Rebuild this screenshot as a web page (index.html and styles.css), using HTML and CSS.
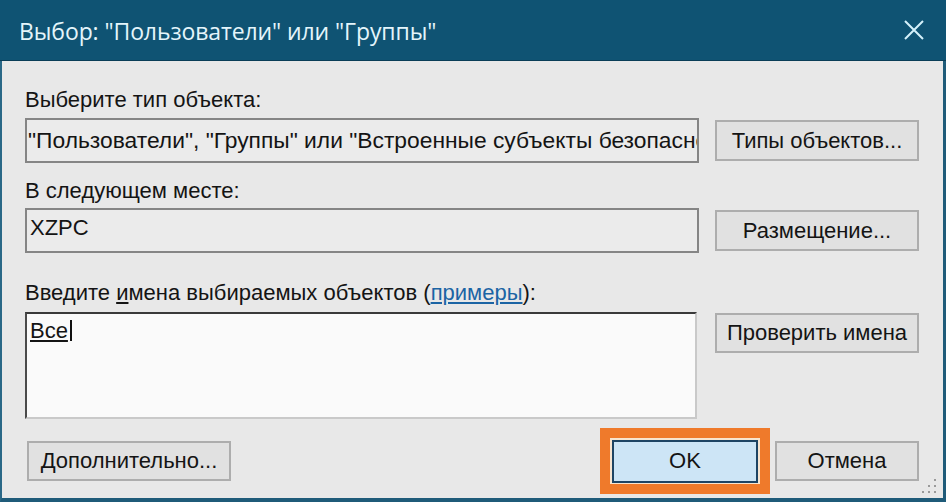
FILE: index.html
```html
<!DOCTYPE html>
<html lang="ru">
<head>
<meta charset="utf-8">
<title>Выбор: "Пользователи" или "Группы"</title>
<link rel="stylesheet" href="styles.css">
</head>
<body>
<div class="window">
  <div class="titlebar">
    <span class="title">Выбор: "Пользователи" или "Группы"</span>
    <svg class="close" width="20" height="20" viewBox="0 0 20 20"><path d="M1 1 L19 19 M19 1 L1 19" stroke="#d4f1fb" stroke-width="2" fill="none"/></svg>
  </div>
  <div class="content">
    <div class="label l1">Выберите тип объекта:</div>
    <div class="row r1">
      <div class="field f1">"Пользователи", "Группы" или "Встроенные субъекты безопасности"</div>
      <button class="btn">Типы объектов...</button>
    </div>
    <div class="label l2">В следующем месте:</div>
    <div class="row r2">
      <div class="field f2">XZPC</div>
      <button class="btn">Размещение...</button>
    </div>
    <div class="label l3">Введите <u>и</u>мена выбираемых объектов (<a class="link" href="#">примеры</a>):</div>
    <div class="row r3">
      <div class="names"><span class="name">Все</span><span class="caret"></span></div>
      <button class="btn btn-top">Проверить имена</button>
    </div>
    <div class="bottom">
      <button class="btn btn-adv">Дополнительно...</button>
      <div class="spacer"></div>
      <div class="highlight"><button class="btn btn-ok">OK</button></div>
      <button class="btn btn-cancel">Отмена</button>
    </div>
  </div>
  <svg class="grip" width="18" height="18" viewBox="0 0 18 18">
    <g fill="#9a9a9a">
      <rect x="13" y="1" width="2" height="2"/>
      <rect x="7" y="7" width="2" height="2"/><rect x="13" y="7" width="2" height="2"/>
      <rect x="1" y="13" width="2" height="2"/><rect x="7" y="13" width="2" height="2"/><rect x="13" y="13" width="2" height="2"/>
    </g>
  </svg>
</div>
</body>
</html>
```

FILE: styles.css
```css
* { box-sizing: border-box; }
html, body { margin: 0; padding: 0; }
body {
  width: 946px;
  height: 502px;
  overflow: hidden;
  background: #e8e8e8;
  font-family: "Liberation Sans", Arial, sans-serif;
  font-size: 22px;
  line-height: 24px;
  color: #141414;
}
.window {
  position: relative;
  width: 946px;
  height: 502px;
  background: #e8e8e8;
  border-left: 2px solid #2a6887;
  border-right: 3px solid #1f5b79;
  border-bottom: 4px solid #1f5b79;
  display: flex;
  flex-direction: column;
}
.titlebar {
  height: 61px;
  flex: none;
  margin-left: -2px;
  margin-right: -3px;
  background: #0f5373;
  border-bottom: 1px solid #0a3d57;
  display: flex;
  align-items: center;
  padding-left: 19px;
  padding-right: 22px;
  padding-top: 1px;
}
.title {
  flex: 1;
  color: #e4f5fb;
  font-family: "Open Sans", "Liberation Sans", sans-serif;
  font-size: 23px;
  letter-spacing: -0.1px;
  white-space: nowrap;
}
.close { flex: none; margin-top: -2px; }
.content {
  flex: 1;
  padding: 0 24px 0 23px;
  display: flex;
  flex-direction: column;
}
.label { height: 24px; white-space: nowrap; }
.l1 { margin-top: 27px; }
.l2 { margin-top: 16px; }
.l3 { margin-top: 28px; }
.row {
  display: grid;
  grid-template-columns: 674px 204px;
  column-gap: 16px;
  align-items: center;
}
.r1 { margin-top: 6px; }
.r2 { margin-top: 5px; }
.r3 { margin-top: 7px; align-items: start; }
.field {
  height: 45px;
  background: #ebebeb;
  border: 2px solid #858585;
  padding-left: 1px;
  white-space: nowrap;
  overflow: hidden;
}
.f1 { padding-top: 8px; font-size: 22.8px; }
.f2 { padding-top: 6px; padding-left: 3px; }
.btn {
  height: 41px;
  margin: 0;
  padding: 0;
  background: #e1e1e1;
  border: 2px solid #adadad;
  border-radius: 0;
  font: inherit;
  color: #141414;
  white-space: nowrap;
}
.btn-top { margin-top: 1px; height: 40px; }
.names {
  width: 672px;
  height: 107px;
  background: #fafafa;
  border: 2px solid #c9c9c9;
  border-top-color: #3a3a3a;
  border-left-color: #4a4a4a;
  padding: 5px 0 0 3px;
  display: flex;
  align-items: flex-start;
}
.name { text-decoration: underline; text-underline-offset: 2px; }
.caret {
  width: 2px;
  height: 21px;
  margin-left: 2px;
  margin-top: 1px;
  background: #111;
}
.link { color: #1b64a4; text-decoration: underline; }
.bottom {
  margin-top: 9px;
  height: 66px;
  display: flex;
  align-items: center;
}
.btn-adv { width: 204px; height: 40px; margin-left: 2px; }
.spacer { flex: 1; }
.highlight {
  width: 170px;
  height: 66px;
  border: 10px solid #ef7a2b;
  background: #f7e4cf;
  display: flex;
  align-items: center;
  justify-content: center;
}
.btn-ok {
  width: 146px;
  height: 43px;
  background: #cde5f6;
  border: 2px solid #1d4464;
}
.btn-cancel { width: 144px; height: 40px; margin-left: 5px; }
.grip { position: absolute; right: 4px; bottom: 2px; }
```
